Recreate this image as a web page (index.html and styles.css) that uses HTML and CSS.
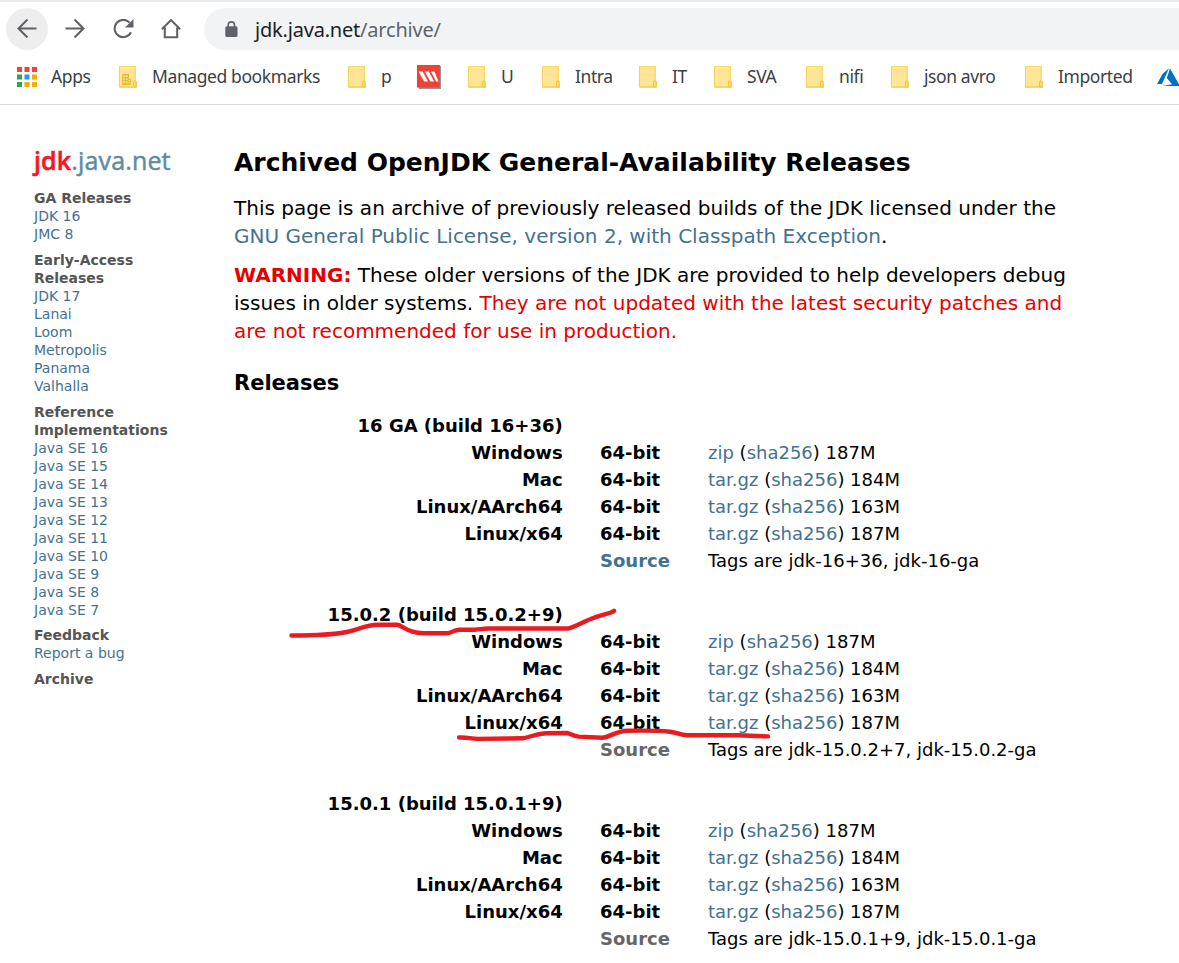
FILE: index.html
```html
<!DOCTYPE html>
<html lang="en">
<head>
<meta charset="utf-8">
<title>Archived OpenJDK GA Releases</title>
<link rel="stylesheet" href="styles.css">
</head>
<body>
<svg class="defs" width="0" height="0" aria-hidden="true">
  <symbol id="folder" viewBox="0 0 18 22">
    <path d="M0 0h17v14.500l1 1V22H1L0 21z" fill="#fcdb67"/>
    <path d="M1 1h14.500v19H1z" fill="#ffe595"/>
    <path d="M.5 1v20H17" fill="none" stroke="#f3d25c"/>
    <path d="M14.500 21v-5a1 1 0 0 1 2.500 0v5z" fill="#fbe080" stroke="#efc53c"/>
  </symbol>
</svg>
<header class="chrome">
  <nav class="toolbar">
    <span class="nav-btn active"><svg width="20" height="20" viewBox="0 0 20 20"><path d="M19.500 9.500H1.500M10.500.5L1.500 9.500l9 9"/></svg></span>
    <span class="nav-btn"><svg width="20" height="20" viewBox="0 0 20 20"><path d="M.5 9.500h18M9.500.5l9 9-9 9"/></svg></span>
    <span class="nav-btn"><svg width="22" height="20" viewBox="0 0 22 20"><path d="M19 13.200A8.600 8.600 0 1 1 17.500 3.600"/><path class="solid" d="M21.500 0v8.500H13z"/></svg></span>
    <span class="nav-btn"><svg width="20" height="20" viewBox="0 0 20 20"><path d="M.8 10.300L10 1.100l9.200 9.200M3.800 8.500v9.700h12.400V8.500"/></svg></span>
    <div class="address">
      <svg width="13" height="17" viewBox="0 0 13 17"><rect x=".3" y="5.300" width="12.200" height="10.700" rx="1.500" fill="#5f6368"/><path d="M3.200 6V4a3.100 3.100 0 0 1 6.300 0v2" fill="none" stroke="#5f6368" stroke-width="1.600"/></svg>
      <span class="url">jdk.java.net<span class="path">/archive/</span></span>
    </div>
  </nav>
  <nav class="bookmarks">
    <span class="bm w-apps"><svg width="20" height="20" viewBox="0 0 20 20"><path fill="#f44336" d="M0 0h5v5H0zM7.500 0h5v5h-5zM15 0h5v5h-5z"/><path fill="#34a256" d="M0 7.500h5v5H0zM0 15h5v5H0z"/><path fill="#2196f3" d="M7.500 7.500h5v5h-5z"/><path fill="#f9ab00" d="M15 7.500h5v5h-5zM7.500 15h5v5h-5zM15 15h5v5h-5z"/></svg><span>Apps</span></span>
    <span class="bm w-managed"><svg width="18" height="22" viewBox="0 0 18 22"><use href="#folder"/><path fill="#e8bf3b" d="M3 8h7v5h2v6H3z"/><path fill="#ffe595" d="M4.200 9.500h1.500V11H4.200zM7 9.500h1.500V11H7zM4.200 12.500h1.500V14H4.200zM7 12.500h1.500V14H7zM4.200 15.500h1.500V17H4.200zM7 15.500h1.500V17H7zM9.700 14h1.200v1.300H9.700zM9.700 16.200h1.200v1.300H9.700z"/></svg><span>Managed bookmarks</span></span>
    <span class="bm w-p"><svg width="18" height="22"><use href="#folder"/></svg><span>p</span></span>
    <span class="bm w-red"><svg width="24" height="24" viewBox="0 0 24 24"><path d="M1 1h23v23H2z" fill="#929797"/><path d="M0 0h22.800v22.600H0z" fill="#ef4136"/><path d="M1.500 6.500h4.200l5.300 10H7.200zM7.700 6.500h4.200l5.300 10h-3.800zM13.900 6.500h3.600l4 10h-2.300z" fill="#fff"/></svg></span>
    <span class="bm w-u"><svg width="18" height="22"><use href="#folder"/></svg><span>U</span></span>
    <span class="bm w-intra"><svg width="18" height="22"><use href="#folder"/></svg><span>Intra</span></span>
    <span class="bm w-it"><svg width="18" height="22"><use href="#folder"/></svg><span>IT</span></span>
    <span class="bm w-sva"><svg width="18" height="22"><use href="#folder"/></svg><span>SVA</span></span>
    <span class="bm w-nifi"><svg width="18" height="22"><use href="#folder"/></svg><span>nifi</span></span>
    <span class="bm w-json"><svg width="18" height="22"><use href="#folder"/></svg><span>json avro</span></span>
    <span class="bm w-imported"><svg width="18" height="22"><use href="#folder"/></svg><span>Imported</span></span>
    <span class="bm azure"><svg width="24" height="20" viewBox="0 0 24 20"><path fill="#0072c6" d="M12 1.200L5 17H0L5.500 7zM13 1.500L23 19H5.500l9.500-1.800-5.200-6.200z"/></svg></span>
  </nav>
</header>
<div class="page">
  <aside class="sidebar">
    <div class="logo"><span class="logo-jdk">jdk</span>.java.net</div>
    <div class="links"><b>GA Releases</b><a>JDK 16</a><a>JMC 8</a></div>
    <div class="links"><b>Early-Access<br>Releases</b><a>JDK 17</a><a>Lanai</a><a>Loom</a><a>Metropolis</a><a>Panama</a><a>Valhalla</a></div>
    <div class="links"><b>Reference<br>Implementations</b><a>Java SE 16</a><a>Java SE 15</a><a>Java SE 14</a><a>Java SE 13</a><a>Java SE 12</a><a>Java SE 11</a><a>Java SE 10</a><a>Java SE 9</a><a>Java SE 8</a><a>Java SE 7</a></div>
    <div class="links"><b>Feedback</b><a>Report a bug</a></div>
    <div class="links"><b>Archive</b></div>
  </aside>
  <main class="content">
    <h1>Archived OpenJDK General-Availability Releases</h1>
    <p>This page is an archive of previously released builds of the JDK licensed under the<br><a>GNU General Public License, version 2, with Classpath Exception</a>.</p>
    <p><strong class="warn">WARNING:</strong> These older versions of the JDK are provided to help developers debug<br>issues in older systems. <span class="warn">They are not updated with the latest security patches and<br>are not recommended for use in production.</span></p>
    <h2>Releases</h2>
    <div class="releases">
      <section class="release">
        <b class="os">16 GA (build 16+36)</b><b></b><span></span>
        <b class="os">Windows</b><b>64-bit</b><span><a>zip</a> (<a>sha256</a>) 187M</span>
        <b class="os">Mac</b><b>64-bit</b><span><a>tar.gz</a> (<a>sha256</a>) 184M</span>
        <b class="os">Linux/AArch64</b><b>64-bit</b><span><a>tar.gz</a> (<a>sha256</a>) 163M</span>
        <b class="os">Linux/x64</b><b>64-bit</b><span><a>tar.gz</a> (<a>sha256</a>) 187M</span>
        <b class="os"></b><b><a>Source</a></b><span>Tags are jdk-16+36, jdk-16-ga</span>
      </section>
      <section class="release">
        <b class="os">15.0.2 (build 15.0.2+9)</b><b></b><span></span>
        <b class="os">Windows</b><b>64-bit</b><span><a>zip</a> (<a>sha256</a>) 187M</span>
        <b class="os">Mac</b><b>64-bit</b><span><a>tar.gz</a> (<a>sha256</a>) 184M</span>
        <b class="os">Linux/AArch64</b><b>64-bit</b><span><a>tar.gz</a> (<a>sha256</a>) 163M</span>
        <b class="os">Linux/x64</b><b>64-bit</b><span><a>tar.gz</a> (<a>sha256</a>) 187M</span>
        <b class="os"></b><b class="source">Source</b><span>Tags are jdk-15.0.2+7, jdk-15.0.2-ga</span>
      </section>
      <section class="release">
        <b class="os">15.0.1 (build 15.0.1+9)</b><b></b><span></span>
        <b class="os">Windows</b><b>64-bit</b><span><a>zip</a> (<a>sha256</a>) 187M</span>
        <b class="os">Mac</b><b>64-bit</b><span><a>tar.gz</a> (<a>sha256</a>) 184M</span>
        <b class="os">Linux/AArch64</b><b>64-bit</b><span><a>tar.gz</a> (<a>sha256</a>) 163M</span>
        <b class="os">Linux/x64</b><b>64-bit</b><span><a>tar.gz</a> (<a>sha256</a>) 187M</span>
        <b class="os"></b><b class="source">Source</b><span>Tags are jdk-15.0.1+9, jdk-15.0.1-ga</span>
      </section>
    </div>
  </main>
</div>
<svg class="marks" viewBox="0 0 1179 963" aria-hidden="true">
  <path d="M291.500 635.500C318 635.500 335 634.500 347 632C360 629 366 625 378 624.800H397C403 625.500 406 632.500 423 633.300H447C452 633 453 630 459 629.700H475C480 629.500 482 628.500 489 628.500H568C575 627 583 622 590 619.300C600 615 611 613.500 614 610.800"/>
  <path d="M459 737.500C468 737 470 738.800 478 738.900L523 738.300C533 736.500 536 733.400 546 733.200L567 733C572 734 572 736 579 736.600L602 737.700C610 737.500 615 731 628 730.800C645 730.500 660 730.700 670 731.700C678 732.500 680 735 687 735.200L737 735.300L768 736.400"/>
</svg>
</body>
</html>
```
FILE: styles.css
```css
* { box-sizing: border-box; }
body {
  margin: 0;
  width: 1179px;
  height: 963px;
  overflow: hidden;
  position: relative;
  background: #fff;
  color: #000;
  font-family: "DejaVu Sans", sans-serif;
}
.defs { display: block; }
a { color: #437291; }
.chrome {
  height: 105px;
  border-top: 2px solid #e7eaed;
  border-bottom: 1px solid #dadce0;
  font-family: "Noto Sans", "Open Sans", sans-serif;
}
.toolbar {
  display: flex;
  align-items: center;
  gap: 6px;
  height: 54px;
  padding-left: 6px;
}
.nav-btn {
  display: flex;
  align-items: center;
  justify-content: center;
  width: 42px;
  height: 42px;
  border-radius: 50%;
}
.nav-btn.active { background: #eeeeee; }
.nav-btn svg { fill: none; stroke: #5f6368; stroke-width: 2.100; }
.nav-btn .solid { fill: #5f6368; stroke: none; }
.address {
  display: flex;
  align-items: center;
  gap: 17px;
  flex: 1;
  height: 42px;
  margin-left: 6px;
  padding-left: 21px;
  border-radius: 21px 0 0 21px;
  background: #f1f3f4;
}
.url { font-size: 20px; letter-spacing: -0.2px; color: #202124; white-space: nowrap; }
.path { color: #5f6368; }
.bookmarks {
  display: flex;
  height: 42px;
  padding-left: 17px;
  font-size: 17.5px;
  letter-spacing: -0.4px;
  color: #3c4043;
}
.bm {
  display: flex;
  flex: none;
  align-items: center;
  gap: 15px;
  white-space: nowrap;
}
.bm svg { flex: none; }
.bm span { padding-bottom: 3px; }
.w-apps { width: 102px; gap: 14px; }
.w-managed { width: 229px; }
.w-p { width: 69px; }
.w-red { width: 51px; }
.w-u { width: 74px; }
.w-intra { width: 97px; }
.w-it { width: 75px; }
.w-sva { width: 92px; }
.w-nifi { width: 85px; }
.w-json { width: 134px; }
.w-imported { width: 132px; }
.page { display: flex; }
.sidebar {
  width: 234px;
  padding: 40px 0 0 34px;
  font-size: 14px;
  line-height: 18px;
}
.logo {
  height: 44px;
  font: 500 25px/30px "Open Sans", sans-serif;
  letter-spacing: 0.15px;
  color: #5f8ba8;
  -webkit-text-stroke: 0.5px;
}
.logo-jdk { color: #fb1520; font-weight: 600; }
.links { margin-bottom: 7.8px; color: #555; }
.links a { display: block; }
.content { padding-top: 42px; white-space: nowrap; }
h1 { margin: 0 0 15px; font-size: 25px; line-height: 32px; }
p { margin: 0 0 11px; font-size: 20px; line-height: 28px; }
.warn { color: #e80000; }
h2 { margin: 24px 0 15px; font-size: 21px; line-height: 28px; }
.release {
  display: grid;
  grid-template-columns: 328px 70px auto;
  grid-auto-rows: 27px;
  column-gap: 38px;
  margin-bottom: 27px;
  font-size: 18px;
  line-height: 27px;
}
.os { margin-right: -0.7px; text-align: right; }
.source { color: #666; }
.marks {
  position: absolute;
  left: 0;
  top: 0;
  width: 1179px;
  height: 963px;
  fill: none;
  stroke: #e81c20;
  stroke-width: 4.400;
  stroke-linecap: round;
  stroke-linejoin: round;
}
```
